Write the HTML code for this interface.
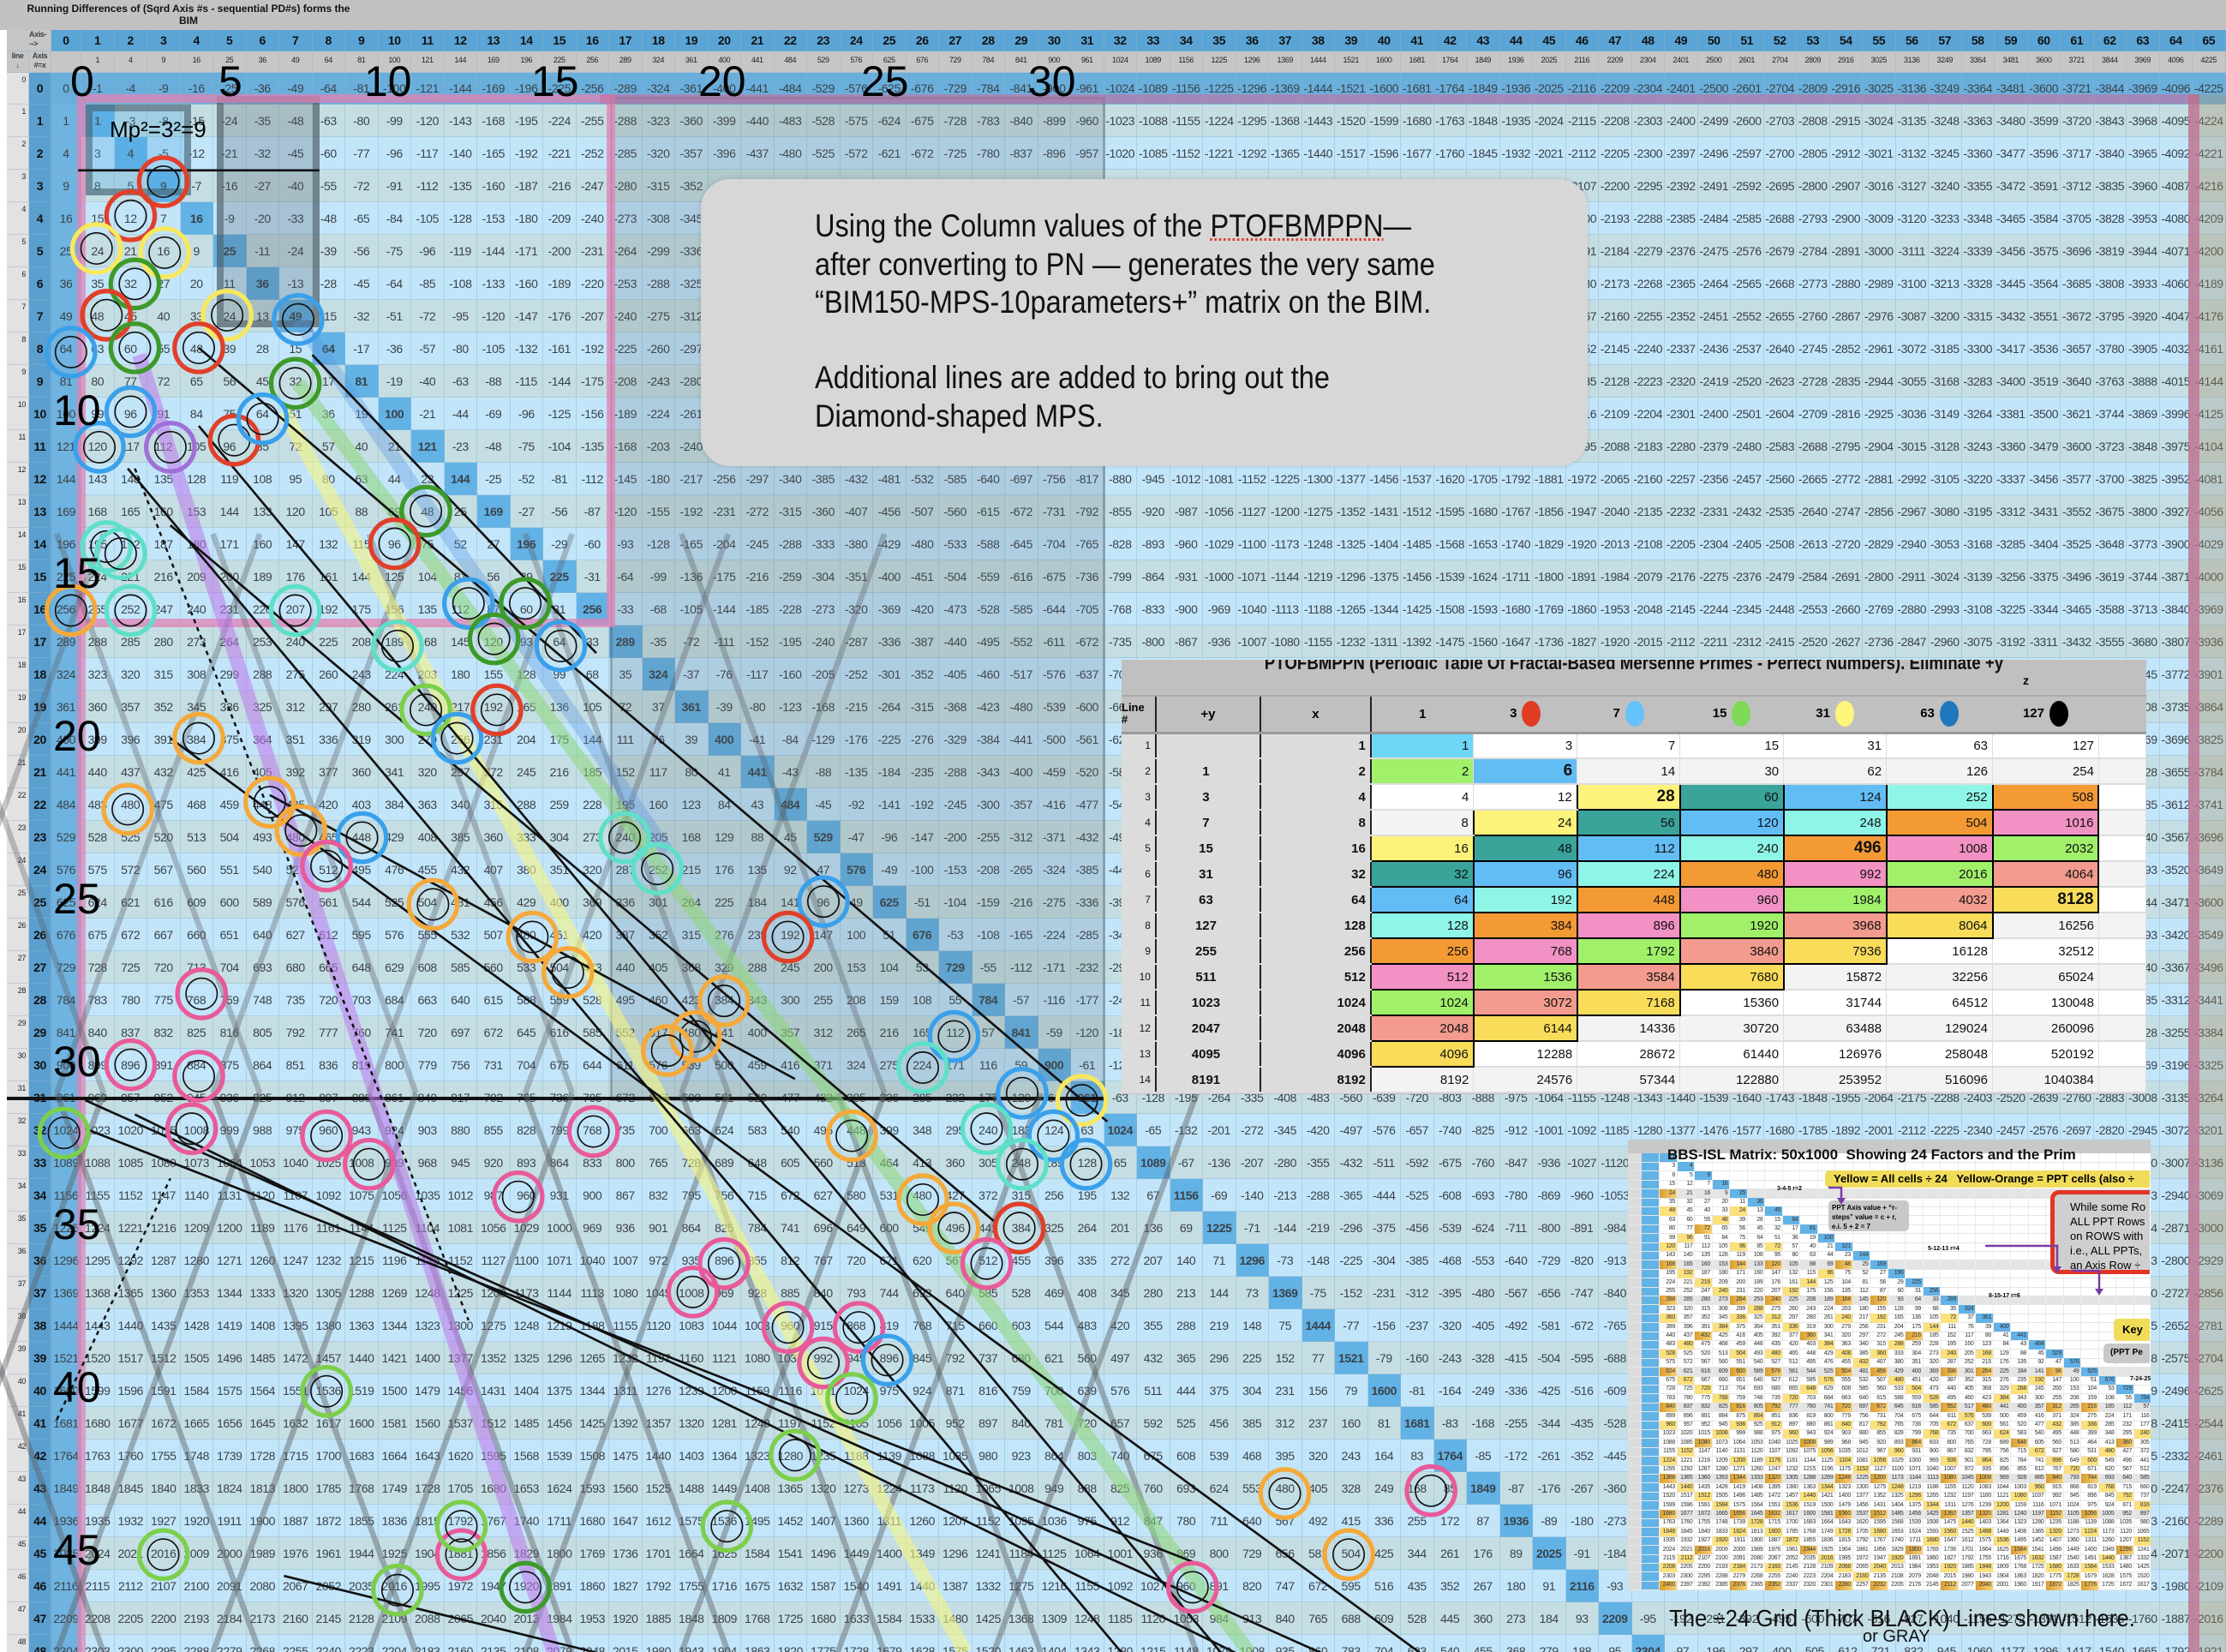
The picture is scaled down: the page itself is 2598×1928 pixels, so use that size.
<!DOCTYPE html>
<html style="overflow:hidden;width:2598px;height:1928px"><head><meta charset="utf-8">
<style>
*{margin:0;padding:0;box-sizing:border-box}
html,body{width:2598px;height:1928px;overflow:hidden}
#root{width:2598px;height:1928px;overflow:hidden;position:relative;background:#c5e6fb;font-family:"Liberation Sans",sans-serif}
.a{position:absolute}
#g div{position:absolute;font-size:14px;color:#3a4248;text-align:center;border-right:1px solid rgba(140,180,205,.45);border-bottom:1px solid rgba(140,180,205,.45);letter-spacing:-.4px;white-space:nowrap;overflow:hidden}
.callout{position:absolute;left:818px;top:209px;width:1035px;height:335px;background:#d7d7d7;border-radius:34px;box-shadow:0 0 6px rgba(0,0,0,.15)}
.callout p{position:absolute;left:133px;font-size:37px;color:#111;white-space:nowrap;transform:scaleX(.88);transform-origin:left center;line-height:44px}
.sp{text-decoration:underline dotted #e04030;text-decoration-thickness:3px}
#tb{position:absolute;left:1309px;top:770px;width:1196px;height:507px;background:#c0c0c0;overflow:hidden}
#tb table{position:absolute;left:0;top:43px;border-collapse:collapse;font-family:"Liberation Sans",sans-serif}
#tb td{height:30px;font-size:15px;text-align:right;padding-right:5px;color:#111;border-bottom:2px solid #ddd;border-right:1px solid #ddd}
#tb th{height:42px;font-size:15px;font-weight:bold;background:#c0c0c0;border-bottom:3px solid #999}
.dot{display:inline-block;width:22px;height:30px;border-radius:50%;vertical-align:middle;margin-left:6px}
.k{border:2px solid #000 !important}
#ins{position:absolute;left:1900px;top:1330px;width:610px;height:526px;background:#fff;overflow:hidden}
#ins div{position:absolute}
#ins .n{font-size:7px;color:#333;text-align:right;width:19px;line-height:10px;letter-spacing:-.3px}
</style></head><body>
<div id="root">
<!-- title band -->
<div class="a" style="left:0;top:0;width:2598px;height:35px;background:#c2c2c2"></div>
<div class="a" style="left:10px;top:3px;font-size:12px;font-weight:bold;color:#111;line-height:14px;width:420px;text-align:center;white-space:nowrap">Running Differences of (Sqrd Axis #s - sequential PD#s) forms the<br>BIM</div>
<div class="a" style="left:0;top:35px;width:8px;height:1893px;background:#fff"></div>

<div id="g"></div>

<!-- overlays -->
<div class="a" style="left:712px;top:113px;width:578px;height:1172px;background:rgba(90,100,105,.18);border:3px solid rgba(80,90,95,.35)"></div>
<div class="a" style="left:100px;top:122px;width:123px;height:106px;border:8px solid rgba(70,85,95,.55);background:rgba(80,170,230,.3)"></div>
<div class="a" style="left:253px;top:112px;width:120px;height:270px;border:8px solid rgba(70,85,95,.55);background:rgba(80,90,100,.25)"></div>
<div class="a" style="left:90px;top:110px;width:628px;height:622px;border:10px solid rgba(226,130,180,.75)"></div>
<div class="a" style="left:700px;top:110px;width:1866px;height:11px;background:rgba(200,110,160,.6)"></div>
<div class="a" style="left:90px;top:700px;width:10px;height:1228px;background:rgba(226,130,180,.7)"></div>
<div class="a" style="left:2554px;top:110px;width:13px;height:1818px;background:rgba(190,110,140,.8)"></div>
<div class="a" style="left:2567px;top:110px;width:31px;height:1818px;background:rgba(170,150,110,.35)"></div>
<div class="a" style="left:8px;top:1280px;width:1282px;height:4px;background:#111"></div>

<svg class="a" style="left:0;top:0" width="2598" height="1928" viewBox="0 0 2598 1928">
<g transform="scale(1.6569)" id="ov" fill="none"></g>
<g font-family="Liberation Sans, sans-serif" font-size="50" fill="#000">
<text x="82" y="112">0</text><text x="255" y="112">5</text><text x="425" y="112">10</text><text x="620" y="112">15</text>
<text x="815" y="112">20</text><text x="1005" y="112">25</text><text x="1200" y="112">30</text>
<text x="62" y="496">10</text><text x="62" y="686">15</text><text x="62" y="876">20</text><text x="62" y="1066">25</text>
<text x="62" y="1256">30</text><text x="62" y="1446">35</text><text x="62" y="1636">40</text><text x="62" y="1826">45</text>
<text x="128" y="160" font-size="26">Mp²=3²=9</text>
</g>
</svg>

<div class="callout">
<p style="top:33px">Using the Column values of the <span class="sp">PTOFBMPPN</span>—</p>
<p style="top:78px">after converting to PN — generates the very same</p>
<p style="top:122px">“BIM150-MPS-10parameters+” matrix on the BIM.</p>
<p style="top:210px">Additional lines are added to bring out the</p>
<p style="top:255px">Diamond-shaped MPS.</p>
</div>

<div id="tb">
<div class="a" style="left:0;top:-9px;width:1196px;text-align:center;font-size:22px;font-weight:bold;color:#111;transform:scaleX(.85)">PTOFBMPPN (Periodic Table Of Fractal-Based Mersenne Primes - Perfect Numbers). Eliminate +y</div>
<div class="a" style="left:0;top:15px;width:1196px;height:28px;border-bottom:2px solid #aaa"></div>
<div class="a" style="left:1052px;top:16px;font-size:14px;font-weight:bold">z</div>
<table>
<tr><th style="width:40px;text-align:left;font-size:13px;line-height:14px;border-right:2px solid #222">Line<br>#</th><th style="width:122px;border-right:2px solid #222">+y</th><th style="width:129px;border-right:2px solid #222">x</th><th style="width:120px">1</th><th style="width:121px">3<span class="dot" style="background:#e03c23"></span></th><th style="width:120px">7<span class="dot" style="background:#66c2fa"></span></th><th style="width:121px">15<span class="dot" style="background:#7ed957"></span></th><th style="width:120px">31<span class="dot" style="background:#fdf67a"></span></th><th style="width:124px">63<span class="dot" style="background:#1f78be"></span></th><th style="width:124px">127<span class="dot" style="background:#000"></span></th><th style="width:55px"></th></tr>
</table>
</div>

<div id="ins"></div>
<div class="a" style="left:1946px;top:1338px;font-size:17px;font-weight:bold;color:#111;white-space:nowrap;width:563px;overflow:hidden">BBS-ISL Matrix: 50x1000&nbsp; Showing 24 Factors and the Prim</div>
<div class="a" style="left:2130px;top:1366px;width:379px;height:20px;background:#f1dc5a;border-radius:5px 0 0 5px;font-size:13px;font-weight:bold;white-space:nowrap;overflow:hidden;padding:2px 0 0 10px">Yellow = All cells ÷ 24&nbsp;&nbsp; Yellow-Orange = PPT cells (also ÷</div>
<div class="a" style="left:2393px;top:1389px;width:116px;height:98px;border:5px solid #e03525;border-right:none;border-radius:10px 0 0 10px;background:#cfcfcf;font-size:13px;line-height:17px;padding:6px 0 0 18px;white-space:nowrap;overflow:hidden">While some Ro<br>ALL PPT Rows<br>on ROWS with<br>i.e., ALL PPTs,<br>an Axis Row ÷</div>
<div class="a" style="left:2134px;top:1401px;width:94px;height:36px;background:#c8c8c8;border-radius:5px;font-size:8px;font-weight:bold;line-height:11px;padding:3px 4px">PPT Axis value + “r-steps” value = c + r, e.i. 5 + 2 = 7</div>
<div class="a" style="left:2467px;top:1539px;width:42px;height:26px;background:#f1dc5a;border-radius:5px 0 0 5px;font-size:13px;font-weight:bold;padding:5px 0 0 10px">Key</div>
<div class="a" style="left:2455px;top:1568px;width:54px;height:23px;background:#c8c8c8;border-radius:5px 0 0 5px;font-size:10px;font-weight:bold;padding:5px 0 0 8px;white-space:nowrap;overflow:hidden">(PPT Pe</div>
<svg class="a" style="left:1900px;top:1330px" width="610" height="526"><g stroke="#7a3aa8" stroke-width="2.5" fill="none"><path d="M234 56H249V72"/><path d="M417 124H501V152"/><path d="M519 153H550V178"/></g><g fill="#7a3aa8"><path d="M244 68h10l-5 8z"/><path d="M496 148h10l-5 8z"/><path d="M545 174h10l-5 8z"/></g>
<g font-family="Liberation Sans,sans-serif" font-size="7" font-weight="bold"><text x="174" y="59">3-4-5   r=2</text><text x="350" y="129">5-12-13   r=4</text><text x="421" y="184">8-15-17   r=6</text><text x="586" y="281">7-24-25</text></g></svg>

<div class="a" style="left:1948px;top:1873px;font-size:28px;color:#111;white-space:nowrap;transform:scaleX(.92);transform-origin:left">The ÷24 Grid (Thick BLACK) Lines shown here.</div>
<div class="a" style="left:2174px;top:1899px;font-size:20px;color:#111">or GRAY</div>
</div>
<script>
(function(){
var h='';
function cx(c){return c==0?60:95+(c-1)*38.5}
function cw(c){return c==0?35:38.5}
function ry(r){return r==0?85:122+(r-1)*38}
function rh(r){return r==0?37:38}
for(var c=0;c<=66;c++){
 h+='<div style="left:'+cx(c)+'px;top:35px;width:'+cw(c)+'px;height:25px;background:#5aa5d6;font-weight:bold;font-size:14px;line-height:25px;color:#111">'+c+'</div>';
 h+='<div style="left:'+cx(c)+'px;top:60px;width:'+cw(c)+'px;height:25px;background:#c6c6c6;font-size:9px;line-height:20px;color:#222">'+(c==0?'':c*c)+'</div>';
}
h+='<div style="left:8px;top:35px;width:52px;height:25px;background:#c6c6c6;font-size:9px;font-weight:bold;line-height:11px;padding-left:26px;text-align:left">Axis-<br>--&gt;</div>';
h+='<div style="left:8px;top:60px;width:26px;height:25px;background:#c6c6c6;font-size:9px;font-weight:bold;line-height:11px">line<br>↓</div>';
h+='<div style="left:34px;top:60px;width:26px;height:25px;background:#c6c6c6;font-size:9px;font-weight:bold;line-height:11px">Axis<br>#=x</div>';
for(var r=0;r<=48;r++){
 var y=ry(r),H=rh(r);
 h+='<div style="left:8px;top:'+y+'px;width:26px;height:'+H+'px;background:#e2e2e2;font-size:9px;text-align:right;padding-right:3px;line-height:16px;color:#222">'+r+'</div>';
 h+='<div style="left:34px;top:'+y+'px;width:26px;height:'+H+'px;background:#5b9fcf;font-weight:bold;font-size:14px;line-height:'+H+'px;color:#111">'+r+'</div>';
 for(var c=0;c<=66;c++){
  var v,bg,fw='normal';
  if(r==0){v=c==0?0:-c*c;bg='#6aafdc';}
  else if(c==0){v=r*r;bg='#6fb3e0';}
  else if(r==c){v=r*r;bg='#62b2e6';fw='bold';}
  else {v=r*r-c*c;bg=(r%2)?'#c5dee3':'#c3e5fa';}
  h+='<div style="left:'+cx(c)+'px;top:'+y+'px;width:'+cw(c)+'px;height:'+H+'px;background:'+bg+';line-height:'+H+'px;font-weight:'+fw+'">'+v+'</div>';
 }
}
document.getElementById('g').innerHTML=h;

var M=[1,3,7,15,31,63,127];
var col={1:'#6fd6f7',2:'#a0f06a',3:'#63bdf5',5:'#fdf37a',6:'#3aa39a',7:'#63bdf5',8:'#8ff5e6',9:'#f39a35',10:'#f291c3',11:'#a0f06a',12:'#f29b8e',13:'#f8dc5a'};
var t=document.querySelector('#tb table'),s='';
for(var i=1;i<=14;i++){
 var x=Math.pow(2,i-1),yv=i==1?'':(x-1);
 var zb=(i%2)?'#fff':'#f3f3f3';
 s+='<tr><td style="background:#dcdcdc;border-right:2px solid #222;font-size:12px">'+i+'</td><td style="background:#dcdcdc;text-align:center;font-weight:bold;border-right:2px solid #222">'+yv+'</td><td style="background:#dcdcdc;font-weight:bold;border-right:2px solid #222">'+x+'</td>';
 for(var j=0;j<7;j++){
  var v=M[j]*x,sum=i+j,b=zb,k='';
  if(i==1&&j==0)b=col[1];
  else if(i==2&&j<2)b=col[j+2];
  else if(sum>=5&&sum<=13&&i>=3){b=col[sum];k=' class="k"';}
  var fw=(v==28||v==496||v==8128||v==6)?'font-weight:bold;font-size:19px;':'';
  s+='<td'+k+' style="background:'+b+';'+fw+'">'+v+'</td>';
 }
 s+='<td style="background:'+zb+'"></td></tr>';
}
t.insertAdjacentHTML('beforeend',s);

var q='<div style="left:0;top:0;width:610px;height:16px;background:#c8c8c8"></div><div style="left:0;top:16px;width:16px;height:510px;background:#dcdcdc"></div><div style="left:16px;top:16px;width:20px;height:510px;background:#62b2e6"></div>';
for(var r=1;r<=49;r++){
 var y=16+(r-1)*10.4;
 if([5,13,17,25,29,37,41].indexOf(r)>=0)q+='<div style="left:36px;top:'+y+'px;width:574px;height:10.4px;background:#e4e4e4"></div>';
 q+='<div style="left:0;top:'+(y+10)+'px;width:610px;height:1px;background:#e6e6e6"></div>';
 for(var c=1;c<=28&&c<=r;c++){
  var X=36+(c-1)*20.5;
  if(r==c)q+='<div style="left:'+X+'px;top:'+y+'px;width:20.5px;height:10.4px;background:#62b2e6"></div>';
  else if((r*r-c*c)%24==0){
   var o=(r%4==1&&c%2==1);
   q+='<div style="left:'+X+'px;top:'+y+'px;width:20.5px;height:10.4px;background:'+(o?'linear-gradient(90deg,#d89a2a,#f7d27a)':'#fbe07c')+'"></div>';
  }
  q+='<div class="n" style="left:'+X+'px;top:'+y+'px">'+(r==c?r*r:r*r-c*c)+'</div>';
 }
}
for(var c=0;c<=28;c++)q+='<div style="left:'+(36+c*20.5)+'px;top:16px;width:1px;height:510px;background:#ececec"></div>';
document.getElementById('ins').innerHTML=q;

var o='';
function L(x1,y1,x2,y2,c,w,d){o+='<line x1="'+x1+'" y1="'+y1+'" x2="'+x2+'" y2="'+y2+'" stroke="'+c+'" stroke-width="'+w+'"'+(d?' stroke-dasharray="'+d+'"':'')+'/>';}
for(var k=-3;k<7;k++){var x0=40+k*110;L(x0,1164,x0+143,770,'rgba(90,95,100,.45)',4);L(x0,770,x0+143,1164,'rgba(90,95,100,.45)',4);}
for(var k=-2;k<5;k++){var x0=40+k*110;L(x0,770,x0+143,376,'rgba(90,95,100,.35)',4);L(x0,376,x0+143,770,'rgba(90,95,100,.35)',4);}
L(98,250,390,1164,'rgba(190,120,235,.55)',10);
L(200,290,680,1164,'rgba(245,245,130,.6)',10);
L(210,270,880,1164,'rgba(140,215,120,.55)',10);
L(210,225,470,600,'rgba(90,150,220,.35)',10);
var bl=[[60,775,930,1164],[95,785,870,1164],[140,245,780,790],[140,300,860,1164],[90,330,790,1164],[120,370,700,860],[120,520,1000,1164],[190,560,560,760],[220,250,420,460],[60,795,840,1100],[200,1110,420,1164],[55,120,225,120]];
bl.forEach(function(a){L(a[0],a[1],a[2],a[3],'#111',1.6);});
L(95,330,330,930,'#111',1.5,'3 3');L(40,1000,120,830,'#111',1.5,'3 3');
var C={r:'#e0402a',y:'#f7e860',g:'#3d9a2a',G:'#7ccf4c',b:'#3ba0ea',t:'#5ee0c8',o:'#f5a93a',p:'#e85a9a',v:'#a070d8'};
var cs='r115,128 r92,152 y68,175 y116,178 g95,200 r75,222 g95,245 y160,222 b210,225 b50,248 r140,245 g208,270 b92,290 b70,315 r165,310 b185,295 v120,315 g300,360 r278,383 b330,425 g370,425 b395,455 g348,450 o50,430 t92,430 t75,385 t208,430 t280,455 G300,500 b322,520 r350,500 o140,520 o190,565 o212,585 b255,590 p230,610 o90,570 t440,590 t463,612 b580,635 r555,660 o305,637 o375,660 o400,685 o510,705 o490,730 b672,730 t650,752 b720,770 y762,775 t695,795 b742,800 t720,820 b765,820 o650,845 o672,865 r718,865 p695,890 p510,890 p488,910 p555,935 p605,935 b625,958 p580,960 G230,980 p142,700 p140,758 p135,795 p230,800 p260,820 p418,797 p365,843 p325,1095 G115,1095 G280,1120 g370,1118 p840,1118 o950,1095 o905,1052 p1008,1050 G512,1075 G325,1075 o600,800 G600,985 G45,798 G560,1025 o470,740 t85,390 p92,750';
cs.split(' ').forEach(function(e){var c=C[e[0]],p=e.slice(1).split(',');o+='<circle cx="'+p[0]+'" cy="'+p[1]+'" r="17" stroke="'+c+'" stroke-width="3.2"/><circle cx="'+p[0]+'" cy="'+p[1]+'" r="11" stroke="#111" stroke-width="1"/>';});
document.getElementById('ov').innerHTML=o;
})();
</script>
</body></html>
